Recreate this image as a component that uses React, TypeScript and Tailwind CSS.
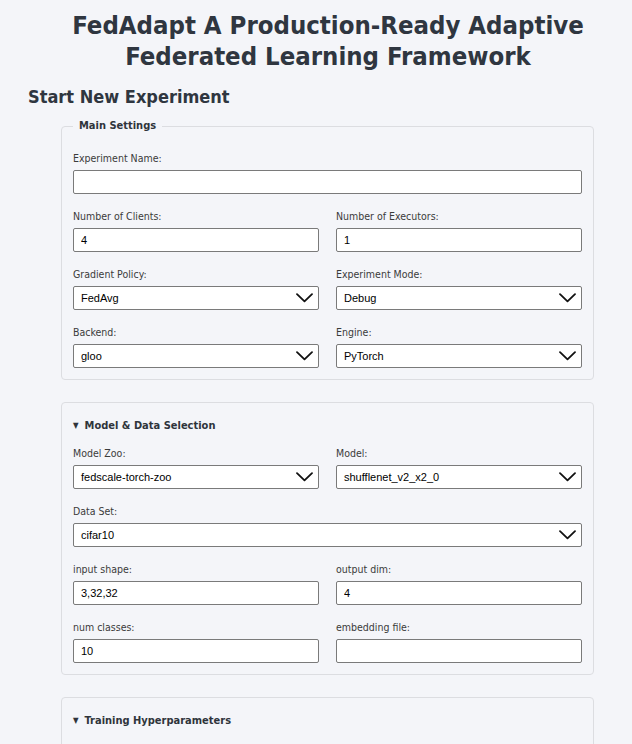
import { FC, ReactNode } from 'react';

const labelFont = { fontFamily: '"DejaVu Sans Condensed", "DejaVu Sans", sans-serif' };
const valueFont = { fontFamily: '"Liberation Sans", Arial, sans-serif' };

const Chevron = () => (
	<svg width="17" height="10" viewBox="0 0 17 10" fill="none" className="shrink-0">
		<path d="M1 1.2 L8.5 8.4 L16 1.2" stroke="#111" strokeWidth="1.8" strokeLinecap="round" strokeLinejoin="round" />
	</svg>
);

type FieldProps = {
	label: string,
	value?: string,
	select?: boolean
}

const Field: FC<FieldProps> = ({ label, value = '', select }) => (
	<div className="flex flex-col min-w-0">
		<label style={labelFont} className="text-[10.5px] leading-[15px] text-[#3b3b3b] mb-[4px]">{label}</label>
		{select ? (
			<div style={valueFont} className="h-[24px] bg-white border border-[#7a7a7a] rounded-[2px] flex items-center justify-between pl-[7px] pr-[5px] text-[11px] text-black">
				<span>{value}</span>
				<Chevron />
			</div>
		) : (
			<input
				readOnly
				defaultValue={value}
				style={valueFont}
				className="h-[24px] w-full bg-white border border-[#7a7a7a] rounded-[2px] px-[7px] text-[11px] text-black outline-none"
			/>
		)}
	</div>
);

const Row: FC<{ children: ReactNode }> = ({ children }) => (
	<div className="grid grid-cols-2 gap-x-[17px]">{children}</div>
);

const Section: FC<{ title: string, children?: ReactNode }> = ({ title, children }) => (
	<div className="border border-[#dcdde1] rounded-[4px] px-[11px] pt-[16px] pb-[11px]">
		<div style={labelFont} className="text-[11px] leading-[14px] font-bold text-[#2f343b] flex items-center gap-[6px]">
			<span className="text-[8px]">▼</span>
			<span>{title}</span>
		</div>
		{children ? <div className="mt-[13px] flex flex-col gap-[15px]">{children}</div> : <div className="h-[40px]" />}
	</div>
);

export default function App() {
	return (
		<div className="h-screen bg-[#f4f5f9] pl-[28px] pr-[4px] pt-[10px] overflow-hidden">
			<h1 style={labelFont} className="text-center text-[25.5px] leading-[31px] font-bold text-[#2f3640]">
				FedAdapt A Production-Ready Adaptive
				<br />
				Federated Learning Framework
			</h1>
			<h2 style={labelFont} className="mt-[14px] text-[18px] leading-[22px] font-bold text-[#2f3640]">
				Start New Experiment
			</h2>
			<div className="ml-[33px] mr-[34px] mt-[11px] flex flex-col gap-[22px]">
				<fieldset className="border border-[#dcdde1] rounded-[4px] px-[11px] pb-[11px] pt-[18px]">
					<legend style={labelFont} className="px-[6px] text-[11px] leading-[14px] font-bold text-[#2f343b]">Main Settings</legend>
					<div className="flex flex-col gap-[15px]">
						<Field label="Experiment Name:" />
						<Row>
							<Field label="Number of Clients:" value="4" />
							<Field label="Number of Executors:" value="1" />
						</Row>
						<Row>
							<Field label="Gradient Policy:" value="FedAvg" select />
							<Field label="Experiment Mode:" value="Debug" select />
						</Row>
						<Row>
							<Field label="Backend:" value="gloo" select />
							<Field label="Engine:" value="PyTorch" select />
						</Row>
					</div>
				</fieldset>
				<Section title="Model & Data Selection">
					<Row>
						<Field label="Model Zoo:" value="fedscale-torch-zoo" select />
						<Field label="Model:" value="shufflenet_v2_x2_0" select />
					</Row>
					<Field label="Data Set:" value="cifar10" select />
					<Row>
						<Field label="input shape:" value="3,32,32" />
						<Field label="output dim:" value="4" />
					</Row>
					<Row>
						<Field label="num classes:" value="10" />
						<Field label="embedding file:" />
					</Row>
				</Section>
				<Section title="Training Hyperparameters" />
			</div>
		</div>
	);
}
